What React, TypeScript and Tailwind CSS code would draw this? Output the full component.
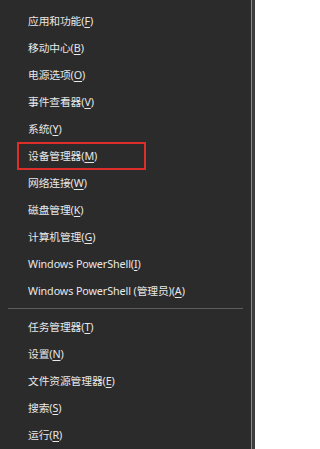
const topItems = [
  { label: '应用和功能', key: 'F' },
  { label: '移动中心', key: 'B' },
  { label: '电源选项', key: 'O' },
  { label: '事件查看器', key: 'V' },
  { label: '系统', key: 'Y' },
  { label: '设备管理器', key: 'M', marked: true },
  { label: '网络连接', key: 'W' },
  { label: '磁盘管理', key: 'K' },
  { label: '计算机管理', key: 'G' },
  { label: 'Windows PowerShell', key: 'I' },
  { label: 'Windows PowerShell (管理员)', key: 'A' },
];

const bottomItems = [
  { label: '任务管理器', key: 'T' },
  { label: '设置', key: 'N' },
  { label: '文件资源管理器', key: 'E' },
  { label: '搜索', key: 'S' },
  { label: '运行', key: 'R' },
];

type Item = { label: string; key: string; marked?: boolean };

const MenuRow = ({ item }: { item: Item }) => (
  <div className="relative flex h-[27.3px] items-center pl-[28px] text-[10.75px] tracking-[-0.1px] text-[#e8e8e8]">
    <span>
      {item.label}(<span className="underline underline-offset-[1.5px]">{item.key}</span>)
    </span>
    {item.marked && (
      <div className="absolute left-[17px] top-[-1px] bottom-0 w-[129px] border-2 border-[#dc2f2c]" />
    )}
  </div>
);

export default function App() {
  return (
    <div
      className="flex h-[449px] w-[255px] overflow-hidden bg-[#3c3c3c]"
      style={{ fontFamily: '"Noto Sans", "Noto Sans CJK SC", sans-serif' }}
    >
      <div className="flex w-[251px] flex-col bg-[#2b2b2b] pt-[8px]">
        {topItems.map((item) => (
          <MenuRow key={item.key} item={item} />
        ))}
        <div className="mx-[8px] mt-[3px] mb-[5px] h-px bg-[#5c5c5c]" />
        {bottomItems.map((item) => (
          <MenuRow key={item.key} item={item} />
        ))}
      </div>
      <div className="w-px bg-[#8a8a8a]" />
    </div>
  );
}
